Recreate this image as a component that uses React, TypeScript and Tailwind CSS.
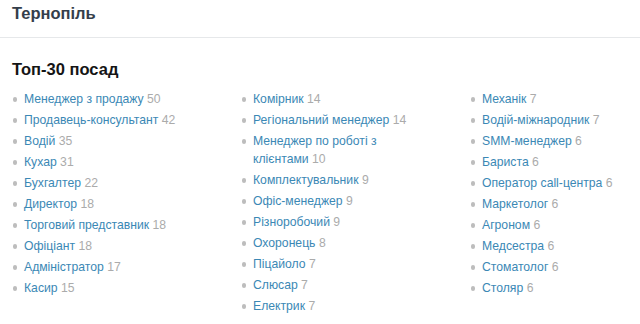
import React from "react";

type Job = { name: string; count: number };

const columns: Job[][] = [
  [
    { name: "Менеджер з продажу", count: 50 },
    { name: "Продавець-консультант", count: 42 },
    { name: "Водій", count: 35 },
    { name: "Кухар", count: 31 },
    { name: "Бухгалтер", count: 22 },
    { name: "Директор", count: 18 },
    { name: "Торговий представник", count: 18 },
    { name: "Офіціант", count: 18 },
    { name: "Адміністратор", count: 17 },
    { name: "Касир", count: 15 },
  ],
  [
    { name: "Комірник", count: 14 },
    { name: "Регіональний менеджер", count: 14 },
    { name: "Менеджер по роботі з клієнтами", count: 10 },
    { name: "Комплектувальник", count: 9 },
    { name: "Офіс-менеджер", count: 9 },
    { name: "Різноробочий", count: 9 },
    { name: "Охоронець", count: 8 },
    { name: "Піцайоло", count: 7 },
    { name: "Слюсар", count: 7 },
    { name: "Електрик", count: 7 },
  ],
  [
    { name: "Механік", count: 7 },
    { name: "Водій-міжнародник", count: 7 },
    { name: "SMM-менеджер", count: 6 },
    { name: "Бариста", count: 6 },
    { name: "Оператор call-центра", count: 6 },
    { name: "Маркетолог", count: 6 },
    { name: "Агроном", count: 6 },
    { name: "Медсестра", count: 6 },
    { name: "Стоматолог", count: 6 },
    { name: "Столяр", count: 6 },
  ],
];

function JobItem({ job }: { job: Job }) {
  return (
    <li className="flex mb-[3px]">
      <span className="w-[12px] shrink-0 flex pt-[7px] pl-[0.5px]">
        <span className="block w-[4.5px] h-[4.5px] rounded-full bg-[#bdbdbd]" />
      </span>
      <span className="text-[12.2px] leading-[18px]">
        <a href="#" className="text-[#3b88b5] no-underline">
          {job.name}
        </a>{" "}
        <span className="text-[#ababab]">{job.count}</span>
      </span>
    </li>
  );
}

export default function App() {
  return (
    <div
      className="w-[640px] h-[324px] bg-white overflow-hidden"
      style={{ fontFamily: '"Liberation Sans", Arial, sans-serif' }}
    >
      <header className="h-[38px] border-b border-[#e6e8ea] px-[12px] pt-[1px]">
        <h1 className="text-[16.5px] font-bold text-[#343e4b] leading-[24px]">
          Тернопіль
        </h1>
      </header>
      <section className="px-[12px] pt-[20px]">
        <h2 className="text-[16.5px] font-bold text-[#151515] leading-[22px] mb-[10px]">
          Топ-30 посад
        </h2>
        <div className="grid grid-cols-[229px_229px_1fr]">
          {columns.map((col, i) => (
            <ul key={i} className="w-[190px]">
              {col.map((job) => (
                <JobItem key={job.name} job={job} />
              ))}
            </ul>
          ))}
        </div>
      </section>
    </div>
  );
}
